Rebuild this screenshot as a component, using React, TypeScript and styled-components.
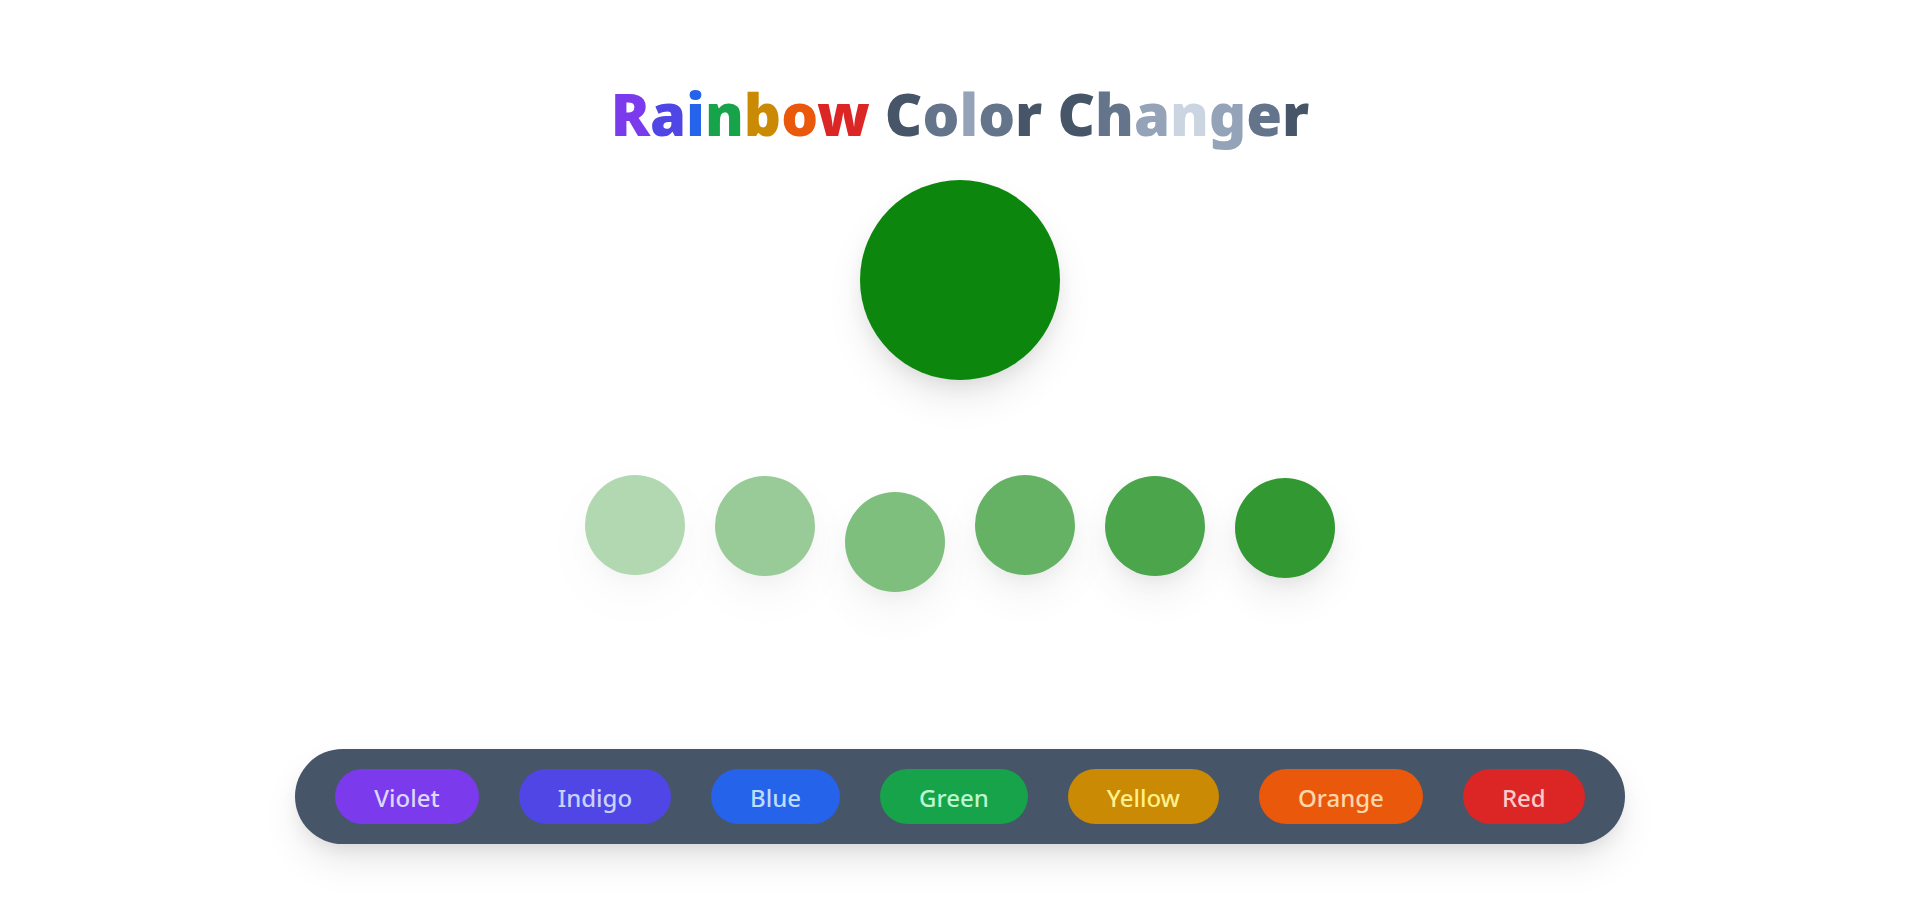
import React, { useState } from "react";
import styled, { createGlobalStyle } from "styled-components";

const GlobalStyle = createGlobalStyle`
  *, *::before, *::after { box-sizing: border-box; }
  body {
    margin: 0;
    background: #ffffff;
    font-family: "Noto Sans", "Open Sans", sans-serif;
  }
`;

const shadow =
  "0 20px 40px -5px rgba(0, 0, 0, 0.1), 0 8px 20px -6px rgba(0, 0, 0, 0.1)";

const Page = styled.main`
  display: flex;
  flex-direction: column;
  align-items: center;
  padding: 79px 0 78px 2px;
`;

const Title = styled.h1`
  margin: 0 0 31px;
  font-size: 58px;
  line-height: 70px;
  font-weight: 900;
`;

const Letter = styled.span<{ $color: string }>`
  color: ${(p) => p.$color};
`;

const MainCircle = styled.div<{ $color: string }>`
  width: 200px;
  height: 200px;
  border-radius: 50%;
  background: ${(p) => p.$color};
  opacity: 0.95;
  box-shadow: ${shadow};
`;

const Shades = styled.div`
  display: flex;
  align-items: flex-start;
  gap: 30px;
  height: 174px;
  margin: 95px 0 100px;
`;

const Shade = styled.div<{ $color: string; $opacity: number; $drop: number }>`
  width: 100px;
  height: 100px;
  margin-top: ${(p) => p.$drop}px;
  border-radius: 50%;
  background: ${(p) => p.$color};
  opacity: ${(p) => p.$opacity};
  box-shadow: ${shadow};
`;

const Palette = styled.nav`
  display: flex;
  gap: 40px;
  padding: 20px 40px;
  border-radius: 50px;
  background: #475569;
  box-shadow: ${shadow};
`;

const ColorButton = styled.button<{ $bg: string; $text: string }>`
  padding: 11px 39px 9px;
  border: 0;
  border-radius: 30px;
  background: ${(p) => p.$bg};
  color: ${(p) => p.$text};
  font-family: inherit;
  font-size: 24px;
  line-height: 35px;
  font-weight: 500;
  cursor: pointer;
`;

const slate = { a: "#475569", b: "#64748b", c: "#94a3b8", d: "#cbd5e1" };

const words: [string, string[]][] = [
  ["Rainbow", ["#7c3aed", "#4f46e5", "#2563eb", "#16a34a", "#ca8a04", "#ea580c", "#dc2626"]],
  ["Color", [slate.a, slate.b, slate.c, slate.b, slate.a]],
  ["Changer", [slate.a, slate.b, slate.c, slate.d, slate.c, slate.b, slate.a]],
];

const buttons = [
  { name: "Violet", bg: "#7c3aed", text: "#ddd6fe" },
  { name: "Indigo", bg: "#4f46e5", text: "#c7d2fe" },
  { name: "Blue", bg: "#2563eb", text: "#bfdbfe" },
  { name: "Green", bg: "#16a34a", text: "#bbf7d0" },
  { name: "Yellow", bg: "#ca8a04", text: "#fef08a" },
  { name: "Orange", bg: "#ea580c", text: "#fed7aa" },
  { name: "Red", bg: "#dc2626", text: "#fecaca" },
];

const shades = [
  { opacity: 0.3, drop: 0 },
  { opacity: 0.4, drop: 1 },
  { opacity: 0.5, drop: 17 },
  { opacity: 0.6, drop: 0 },
  { opacity: 0.7, drop: 1 },
  { opacity: 0.8, drop: 3 },
];

export default function App() {
  const [color, setColor] = useState("green");

  return (
    <>
      <GlobalStyle />
      <Page>
        <Title>
          {words.map(([word, colors], w) => (
            <React.Fragment key={word}>
              {w > 0 && " "}
              {word.split("").map((char, i) => (
                <Letter key={i} $color={colors[i]}>
                  {char}
                </Letter>
              ))}
            </React.Fragment>
          ))}
        </Title>
        <MainCircle $color={color} />
        <Shades>
          {shades.map((s) => (
            <Shade key={s.opacity} $color={color} $opacity={s.opacity} $drop={s.drop} />
          ))}
        </Shades>
        <Palette aria-label="Colors">
          {buttons.map((b) => (
            <ColorButton
              key={b.name}
              type="button"
              $bg={b.bg}
              $text={b.text}
              onClick={() => setColor(b.name.toLowerCase())}
            >
              {b.name}
            </ColorButton>
          ))}
        </Palette>
      </Page>
    </>
  );
}
